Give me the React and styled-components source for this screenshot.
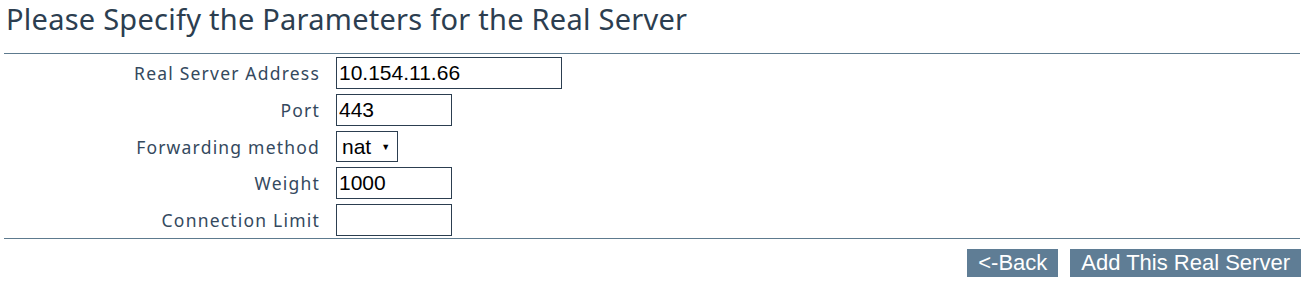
import React from "react";
import styled, { createGlobalStyle } from "styled-components";

const Global = createGlobalStyle`
  body {
    margin: 0;
    background: #ffffff;
    font-family: "Noto Sans", "Open Sans", sans-serif;
  }
`;

const Page = styled.div`
  padding: 0 7px 0 4px;
`;

const Title = styled.h2`
  margin: 0;
  padding: 1px 0 0 2px;
  height: 53px;
  box-sizing: border-box;
  font-size: 29px;
  font-weight: 400;
  color: #2c3e50;
  line-height: 36px;
  letter-spacing: 0.25px;
`;

const Rule = styled.div`
  height: 1px;
  background: #5d7a8e;
`;

const Form = styled.div`
  display: grid;
  grid-template-columns: 316px auto;
  column-gap: 16px;
  row-gap: 5px;
  padding: 3px 0 2px;
  align-items: center;
`;

const Label = styled.label`
  text-align: right;
  font-size: 17.5px;
  color: #34495e;
  letter-spacing: 1.2px;
`;

const Field = styled.div`
  display: flex;
`;

const TextInput = styled.input`
  box-sizing: border-box;
  width: ${p => p.$w}px;
  height: 32px;
  border: 1px solid #2c3e50;
  padding: 0 2px;
  font-family: "Liberation Sans", Arial, sans-serif;
  font-size: 21px;
  color: #000;
  outline: none;
`;

const SelectBox = styled.div`
  box-sizing: border-box;
  width: 62px;
  height: 31px;
  border: 1px solid #2c3e50;
  display: flex;
  align-items: center;
  padding: 0 0 0 5px;
  gap: 10px;
  font-family: "Liberation Sans", Arial, sans-serif;
  font-size: 21px;
  color: #000;
`;

const Caret = styled.span`
  font-size: 9px;
`;

const Actions = styled.div`
  display: flex;
  justify-content: flex-end;
  gap: 12px;
  padding: 10px 0 0;
  margin-right: -1px;
`;

const Button = styled.button`
  height: 28px;
  padding: 0 11px;
  border: none;
  background: #5f7d95;
  color: #ffffff;
  font-family: "Liberation Sans", Arial, sans-serif;
  font-size: 22px;
  line-height: 28px;
  cursor: pointer;
`;

export default function App() {
  return (
    <Page>
      <Global />
      <Title>Please Specify the Parameters for the Real Server</Title>
      <Rule />
      <Form>
        <Label>Real Server Address</Label>
        <Field>
          <TextInput $w={226} defaultValue="10.154.11.66" />
        </Field>
        <Label>Port</Label>
        <Field>
          <TextInput $w={116} defaultValue="443" />
        </Field>
        <Label>Forwarding method</Label>
        <Field>
          <SelectBox>
            nat <Caret>▼</Caret>
          </SelectBox>
        </Field>
        <Label>Weight</Label>
        <Field>
          <TextInput $w={116} defaultValue="1000" />
        </Field>
        <Label>Connection Limit</Label>
        <Field>
          <TextInput $w={116} defaultValue="" />
        </Field>
      </Form>
      <Rule />
      <Actions>
        <Button>&lt;-Back</Button>
        <Button>Add This Real Server</Button>
      </Actions>
    </Page>
  );
}
